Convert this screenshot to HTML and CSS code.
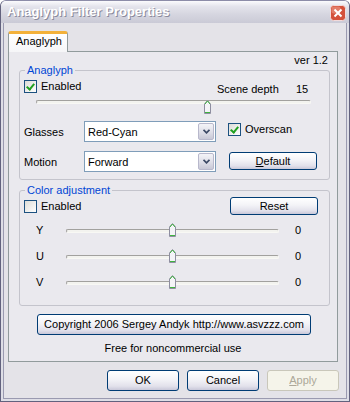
FILE: index.html
```html
<!DOCTYPE html>
<html lang="en">
<head>
  <meta charset="UTF-8">
  <title>Anaglyph Filter Properties</title>
  <link rel="stylesheet" href="styles.css">
</head>
<body>
  <div class="window">
    <div class="titlebar">
      <span class="title">Anaglyph Filter Properties</span>
      <span class="close">
        <svg width="16" height="16" viewBox="0 0 16 16">
          <rect x="0.5" y="0.5" width="15" height="15" rx="3" fill="#d4503a" stroke="#f2dada"/>
          <rect x="1.5" y="1.5" width="9" height="7" rx="2" fill="#e27c68"/>
          <path d="M4.5 4.5L11.5 11.5M11.5 4.5L4.5 11.5" stroke="#ffffff" stroke-width="2"/>
        </svg>
      </span>
    </div>

    <div class="client">
      <div class="tabs">
        <div class="tab">Anaglyph</div>
      </div>

      <div class="panel">
        <div class="ver">ver 1.2</div>

        <fieldset class="group group-anaglyph">
          <legend>Anaglyph</legend>
          <div class="row row-top">
            <label class="check"><span class="box checked"></span>Enabled</label>
            <div class="depth">
              <span class="depth-label">Scene depth</span>
              <span class="depth-value">15</span>
            </div>
          </div>
          <div class="slider slider-depth">
            <div class="track"></div>
            <svg class="thumb" style="left: calc(62.5% - 3.5px)" width="7" height="14" viewBox="0 0 7 14">
              <path d="M0.5 13.5V4L3.5 0.5L6.5 4V13.5Z" fill="#f4f4f7" stroke="#8e8ea0"/>
              <path d="M1 4L3.5 1L6 4" fill="none" stroke="#3fb33f"/>
              <path d="M1 12.5H6" stroke="#3fb33f"/>
            </svg>
          </div>
          <div class="row row-select">
            <span class="field-label">Glasses</span>
            <div class="combo">
              <span>Red-Cyan</span>
              <span class="drop"><svg width="7" height="5" viewBox="0 0 7 5"><path d="M0.5 0.8L3.5 3.8L6.5 0.8" fill="none" stroke="#3d4a66" stroke-width="1.8"/></svg></span>
            </div>
            <label class="check check-overscan"><span class="box checked"></span>Overscan</label>
          </div>
          <div class="row row-select row-motion">
            <span class="field-label">Motion</span>
            <div class="combo">
              <span>Forward</span>
              <span class="drop"><svg width="7" height="5" viewBox="0 0 7 5"><path d="M0.5 0.8L3.5 3.8L6.5 0.8" fill="none" stroke="#3d4a66" stroke-width="1.8"/></svg></span>
            </div>
            <button class="btn btn-side"><u>D</u>efault</button>
          </div>
        </fieldset>

        <fieldset class="group group-color">
          <legend>Color adjustment</legend>
          <div class="row row-head">
            <label class="check"><span class="box"></span>Enabled</label>
            <button class="btn btn-side">Reset</button>
          </div>
          <div class="row row-yuv">
            <span class="yuv-label">Y</span>
            <div class="slider slider-yuv">
              <div class="track"></div>
              <svg class="thumb" style="left: calc(50% - 3.5px)" width="7" height="14" viewBox="0 0 7 14">
                <path d="M0.5 13.5V4L3.5 0.5L6.5 4V13.5Z" fill="#f4f4f7" stroke="#8e8ea0"/>
                <path d="M1 4L3.5 1L6 4" fill="none" stroke="#3fb33f"/>
                <path d="M1 12.5H6" stroke="#3fb33f"/>
              </svg>
            </div>
            <span class="yuv-value">0</span>
          </div>
          <div class="row row-yuv">
            <span class="yuv-label">U</span>
            <div class="slider slider-yuv">
              <div class="track"></div>
              <svg class="thumb" style="left: calc(50% - 3.5px)" width="7" height="14" viewBox="0 0 7 14">
                <path d="M0.5 13.5V4L3.5 0.5L6.5 4V13.5Z" fill="#f4f4f7" stroke="#8e8ea0"/>
                <path d="M1 4L3.5 1L6 4" fill="none" stroke="#3fb33f"/>
                <path d="M1 12.5H6" stroke="#3fb33f"/>
              </svg>
            </div>
            <span class="yuv-value">0</span>
          </div>
          <div class="row row-yuv">
            <span class="yuv-label">V</span>
            <div class="slider slider-yuv">
              <div class="track"></div>
              <svg class="thumb" style="left: calc(50% - 3.5px)" width="7" height="14" viewBox="0 0 7 14">
                <path d="M0.5 13.5V4L3.5 0.5L6.5 4V13.5Z" fill="#f4f4f7" stroke="#8e8ea0"/>
                <path d="M1 4L3.5 1L6 4" fill="none" stroke="#3fb33f"/>
                <path d="M1 12.5H6" stroke="#3fb33f"/>
              </svg>
            </div>
            <span class="yuv-value">0</span>
          </div>
        </fieldset>

        <button class="btn btn-copyright">Copyright 2006 Sergey Andyk http://www.asvzzz.com</button>
        <p class="note">Free for noncommercial use</p>
      </div>

      <div class="actions">
        <button class="btn btn-action">OK</button>
        <button class="btn btn-action">Cancel</button>
        <button class="btn btn-action" disabled><u>A</u>pply</button>
      </div>
    </div>
  </div>
</body>
</html>
```

FILE: styles.css
```css
* {
  box-sizing: border-box;
}
body {
  margin: 0;
  background: #fff;
  font-family: "Liberation Sans", Arial, sans-serif;
  font-size: 11px;
  color: #000;
}
.window {
  width: 350px;
  height: 402px;
  border: 1px solid #62627e;
  border-top-color: #8c8ca8;
  border-radius: 6px 6px 0 0;
  background: #dedee6;
  padding: 0 2px 2px;
  display: flex;
  flex-direction: column;
  overflow: hidden;
}
.titlebar {
  height: 22px;
  margin: 0 -2px;
  padding: 0 3px 0 6px;
  display: flex;
  align-items: flex-start;
  background: linear-gradient(#fbfbfd 0%, #e4e4ec 25%, #d6d6e0 60%, #cacad6 100%);
}
.title {
  line-height: 22px;
  font-size: 13px;
  font-weight: bold;
  color: #fff;
  text-shadow: 1px 1px 0 #8a8a9c;
}
.close {
  display: flex;
  flex: none;
  width: 16px;
  height: 16px;
  margin: 4px 0 0 auto;
}
.client {
  flex: 1;
  border: 1px solid #9a9ab0;
  border-top: none;
  background: #e4e3e8;
  padding: 8px 0 0 4px;
}
.tabs {
  display: flex;
  height: 20px;
}
.tab {
  position: relative;
  z-index: 1;
  width: 60px;
  height: 21px;
  padding: 1px 0 0 7px;
  border: 1px solid #919b9c;
  border-bottom: none;
  border-top: 3px solid #f3b13a;
  border-radius: 3px 3px 0 0;
  background: linear-gradient(#ffffff, #f6f6f8);
  line-height: 13px;
}
.panel {
  width: 330px;
  height: 311px;
  border: 1px solid #919b9c;
  background: #eae9ee;
  padding-top: 2px;
}
.ver {
  text-align: right;
  padding-right: 9px;
  line-height: 12px;
  margin-bottom: -2px;
}
.group {
  margin: 0 7px 0 10px;
  padding: 0 11px 7px 4px;
  border: 1px solid #c4c4cc;
  border-radius: 3px;
  min-inline-size: 0;
}
.group legend {
  margin-left: 1px;
  padding: 0 2px;
  line-height: 13px;
  color: #0046d5;
}
.group-color {
  margin-top: 4px;
  padding-bottom: 16px;
}
.row {
  display: flex;
  align-items: center;
}
.row-top {
  margin-top: 3px;
  height: 13px;
  justify-content: space-between;
}
.check {
  display: flex;
  align-items: center;
  gap: 4px;
  line-height: 13px;
}
.box {
  width: 13px;
  height: 13px;
  border: 1px solid #1c5180;
  background: linear-gradient(135deg, #dcdcd7, #ffffff);
}
.box.checked {
  position: relative;
}
.box.checked::after {
  content: "";
  position: absolute;
  left: 3px;
  top: 1px;
  width: 3px;
  height: 6px;
  border: solid #21a121;
  border-width: 0 2px 2px 0;
  transform: rotate(40deg);
}
.depth {
  display: flex;
  width: 101px;
  margin-top: 4px;
}
.depth-label {
  flex: 1;
}
.depth-value {
  width: 22px;
}
.slider {
  position: relative;
  height: 14px;
}
.track {
  margin-top: 6px;
  height: 4px;
  border: 1px solid;
  border-color: #a2a19e #f8f8f4 #f8f8f4 #a2a19e;
  border-radius: 2px;
  background: #f3f3ef;
}
.thumb {
  position: absolute;
  top: 0;
}
.slider-depth {
  margin: 7px 0 0 12px;
  width: 275px;
}
.row-select {
  margin-top: 7px;
  height: 21px;
}
.row-motion {
  margin-top: 9px;
}
.field-label {
  width: 60px;
}
.combo {
  width: 132px;
  height: 21px;
  border: 1px solid #7f9db9;
  background: #fff;
  display: flex;
  align-items: center;
  padding: 0 1px 0 3px;
}
.combo span:first-child {
  flex: 1;
}
.drop {
  width: 16px;
  height: 17px;
  border: 1px solid #b8b8cc;
  border-radius: 2px;
  background: linear-gradient(#f4f4f8, #dcdce6 60%, #c8c8d6);
  display: flex;
  align-items: center;
  justify-content: center;
}
.check-overscan {
  margin-left: 12px;
  align-self: flex-start;
  margin-top: 2px;
}
.btn {
  font-family: inherit;
  font-size: 11px;
  color: #000;
  border: 1px solid #003c74;
  border-radius: 3px;
  background: linear-gradient(#ffffff 0%, #f3f3f7 45%, #e2e1eb 80%, #c9c8d9 100%);
  padding: 0;
  line-height: 13px;
}
.btn:disabled {
  border-color: #c9c7ba;
  background: #f5f4ea;
  color: #aca899;
}
.btn-side {
  width: 88px;
  height: 18px;
  margin-left: auto;
}
.row-motion .btn-side {
  margin-left: 13px;
  align-self: flex-start;
  margin-top: 1px;
}
.row-head {
  height: 18px;
}
.row-yuv {
  height: 14px;
  margin-top: 12px;
}
.row-head + .row-yuv {
  margin-top: 8px;
}
.yuv-label {
  width: 42px;
  padding-left: 12px;
}
.slider-yuv {
  width: 213px;
}
.yuv-value {
  margin-left: 16px;
}
.btn-copyright {
  display: block;
  margin: 8px 0 0 28px;
  width: 274px;
  height: 21px;
}
.note {
  margin: 7px 0 0;
  text-align: center;
  line-height: 13px;
}
.actions {
  display: flex;
  justify-content: flex-end;
  gap: 8px;
  margin-top: 8px;
  padding-right: 7px;
}
.btn-action {
  width: 72px;
  height: 21px;
}
```
